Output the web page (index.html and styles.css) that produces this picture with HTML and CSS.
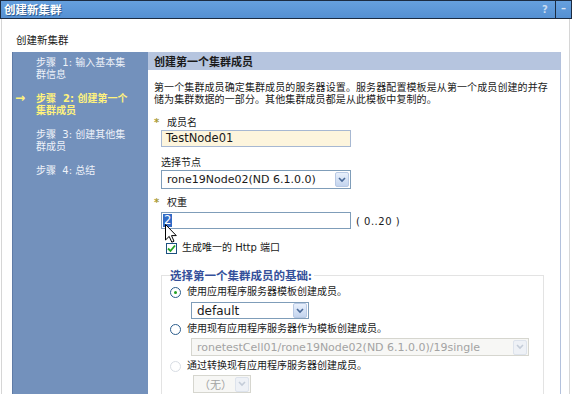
FILE: index.html
```html
<!DOCTYPE html>
<html lang="zh">

<head>
    <meta charset="UTF-8">
    <title>创建新集群</title>
    <link rel="stylesheet" href="styles.css">
</head>

<body>
    <div class="titlebar">
        <span class="title">创建新集群</span>
        <span class="tb-help">?</span>
        <span class="tb-min">–</span>
    </div>

    <div class="frame">
        <div class="subtitle">创建新集群</div>

        <div class="wizard">
            <div class="steps">
                <div class="step">步骤&nbsp; 1: 输入基本集<br>群信息</div>
                <div class="step current"><span class="arrow">→</span>步骤&nbsp; 2: 创建第一个<br>集群成员</div>
                <div class="step">步骤&nbsp; 3: 创建其他集<br>群成员</div>
                <div class="step">步骤&nbsp; 4: 总结</div>
            </div>

            <div class="panel">
                <div class="panel-head">创建第一个集群成员</div>
                <div class="panel-body">
                    <p class="intro">第一个集群成员确定集群成员的服务器设置。服务器配置模板是从第一个成员创建的并存<br>储为集群数据的一部分。其他集群成员都是从此模板中复制的。</p>

                    <div class="label first"><span class="star">*</span>成员名</div>
                    <div class="input name">TestNode01</div>

                    <div class="label node">选择节点</div>
                    <div class="select wide">
                        <span class="select-text">rone19Node02(ND 6.1.0.0)</span>
                        <span class="drop"><svg width="8" height="6" viewBox="0 0 8 6"><path d="M1 1 L4 4 L7 1" fill="none" stroke="#4a6a9a" stroke-width="1.6"/></svg></span>
                    </div>

                    <div class="label weight"><span class="star">*</span>权重</div>
                    <div class="weight-row">
                        <div class="input num"><span class="sel">2</span>
                            <svg class="cursor" width="12" height="19" viewBox="0 0 12 19"><path d="M0.5 0.5 L0.5 16 L4.2 12.4 L6.8 18.2 L9 17.2 L6.5 11.6 L11.3 11.6 Z" fill="#fff" stroke="#000" stroke-width="1"/></svg>
                        </div>
                        <span class="range">( 0..20 )</span>
                    </div>

                    <div class="check-row">
                        <span class="checkbox"><svg width="9" height="9" viewBox="0 0 9 9"><path d="M1 4.5 L3.5 7 L8 1.5" fill="none" stroke="#21a121" stroke-width="1.8"/></svg></span>
                        生成唯一的 Http 端口
                    </div>

                    <fieldset class="basis">
                        <legend>选择第一个集群成员的基础:</legend>

                        <div class="radio-row"><span class="radio on"></span>使用应用程序服务器模板创建成员。</div>
                        <div class="select small">
                            <span class="select-text">default</span>
                            <span class="drop"><svg width="8" height="6" viewBox="0 0 8 6"><path d="M1 1 L4 4 L7 1" fill="none" stroke="#4a6a9a" stroke-width="1.6"/></svg></span>
                        </div>

                        <div class="radio-row"><span class="radio"></span>使用现有应用程序服务器作为模板创建成员。</div>
                        <div class="select long off">
                            <span class="select-text">ronetestCell01/rone19Node02(ND 6.1.0.0)/19single</span>
                            <span class="drop"><svg width="8" height="6" viewBox="0 0 8 6"><path d="M1 1 L4 4 L7 1" fill="none" stroke="#c4ccd8" stroke-width="1.6"/></svg></span>
                        </div>

                        <div class="radio-row"><span class="radio off"></span>通过转换现有应用程序服务器创建成员。</div>
                        <div class="select tiny off">
                            <span class="select-text">（无）</span>
                            <span class="drop"><svg width="8" height="6" viewBox="0 0 8 6"><path d="M1 1 L4 4 L7 1" fill="none" stroke="#c4ccd8" stroke-width="1.6"/></svg></span>
                        </div>
                    </fieldset>
                </div>
            </div>
        </div>
    </div>
</body>

</html>
```

FILE: styles.css
```css
body {
    margin: 0;
    width: 572px;
    height: 394px;
    overflow: hidden;
    background-color: white;
    font-family: 'DejaVu Sans', 'Noto Sans CJK SC', sans-serif;
    font-size: 10px;
    color: #1a1a1a;
}

.titlebar {
    display: flex;
    align-items: center;
    height: 17px;
    border: 1px solid #1c2b40;
    background: linear-gradient(#66a0de, #5590d2);
}

.title {
    flex: 1;
    padding-left: 3px;
    color: white;
    font-weight: bold;
    font-size: 11.5px;
    line-height: 17px;
    font-family: 'Noto Sans CJK SC', sans-serif;
    text-shadow: 1px 1px 0 #2d5a90;
}

.tb-help {
    width: 9px;
    margin-right: 4px;
    color: #c9dbf0;
    font-weight: bold;
    font-size: 10px;
}

.tb-min {
    width: 15px;
    height: 17px;
    line-height: 16px;
    text-align: center;
    border-left: 1px solid #1c2b40;
    color: #d8e4f2;
    font-weight: bold;
}

.frame {
    margin: 0 2px 0 1px;
    padding: 0 8px 0 10px;
    border-left: 1px solid #d6d6d6;
    border-right: 1px solid #d6d6d6;
    height: 375px;
}

.subtitle {
    padding: 14px 0 0 4px;
    height: 19px;
    line-height: 14px;
    font-family: 'Noto Sans CJK SC', sans-serif;
    font-size: 10.5px;
}

.wizard {
    display: flex;
    height: 360px;
}

.steps {
    width: 135px;
    padding-top: 5px;
    background-color: #7391bc;
    border-left: 1px solid #5f7ba6;
}

.step {
    position: relative;
    padding-left: 23px;
    margin-bottom: 12px;
    line-height: 12px;
    color: #eef2f9;
}

.step.current {
    color: #fff27c;
    font-weight: bold;
}

.arrow {
    position: absolute;
    left: 2px;
    top: -1px;
    font-size: 12px;
}

.panel {
    flex: 1;
    border-right: 1px solid #b3c1dc;
}

.panel-head {
    height: 18px;
    line-height: 18px;
    padding-left: 6px;
    background-color: #b6c5df;
    font-weight: bold;
    font-size: 11px;
    font-family: 'Noto Sans CJK SC', sans-serif;
}

.panel-body {
    padding: 12px 6px 0 13px;
}

.intro {
    margin: 0 0 0 -7px;
    line-height: 12px;
    white-space: nowrap;
    letter-spacing: 0.1px;
}

.label {
    line-height: 12px;
    height: 12px;
    margin-left: -7px;
}

.label.first {
    margin-top: 11px;
    margin-bottom: 1px;
}

.label.node {
    margin-top: 10px;
    margin-bottom: 1px;
    margin-left: 0;
}

.label.weight {
    margin-top: 8px;
    margin-bottom: 3px;
}

.star {
    display: inline-block;
    width: 13px;
    color: #a99a34;
    font-weight: bold;
}

.input {
    box-sizing: border-box;
    width: 190px;
    height: 17px;
    line-height: 15px;
    padding-left: 4px;
    font-size: 11.5px;
}

.input.name {
    background-color: #fdf5dd;
    border: 1px solid #a7b8d2;
}

.weight-row {
    display: flex;
    align-items: center;
    gap: 5px;
}

.input.num {
    position: relative;
    background-color: white;
    border: 1px solid #7f9db9;
    padding-left: 1px;
}

.sel {
    display: inline-block;
    background-color: #316ac5;
    color: white;
    line-height: 13px;
    padding: 0 1px;
}

.cursor {
    position: absolute;
    left: 3px;
    top: 11px;
}

.range {
    font-size: 10px;
    letter-spacing: 0.5px;
    padding-top: 2px;
}

.select {
    box-sizing: border-box;
    display: flex;
    align-items: center;
    height: 19px;
    border: 1px solid #7f9db9;
    background-color: white;
    padding: 0 1px 0 5px;
    font-size: 11px;
}

.select-text {
    flex: 1;
    white-space: nowrap;
    overflow: hidden;
}

.drop {
    display: flex;
    align-items: center;
    justify-content: center;
    width: 14px;
    height: 15px;
    box-sizing: border-box;
    border: 1px solid #b8c9e4;
    border-radius: 2px;
    background: linear-gradient(#e8f0fc, #c3d4ee);
}

.select.wide {
    width: 190px;
}

.check-row {
    display: flex;
    align-items: center;
    margin: 13px 0 0 5px;
    line-height: 12px;
}

.checkbox {
    display: flex;
    align-items: center;
    justify-content: center;
    width: 9px;
    height: 9px;
    margin-right: 5px;
    border: 1px solid #1c5180;
    background-color: white;
}

.basis {
    margin: 14px 10px 0 0;
    padding: 0 0 8px 8px;
    border: 1px solid #e3e3e3;
    border-bottom: none;
    min-width: 0;
}

.basis legend {
    padding: 0 2px 0 0;
    color: #35509a;
    font-weight: bold;
    font-size: 11.5px;
    line-height: 14px;
    font-family: 'Noto Sans CJK SC', sans-serif;
}

.radio-row {
    display: flex;
    align-items: center;
    line-height: 12px;
    margin-top: 4px;
}

.radio {
    box-sizing: border-box;
    width: 11px;
    height: 11px;
    margin-right: 6px;
    border: 1px solid #2c5d8c;
    border-radius: 50%;
    background-color: white;
    position: relative;
}

.radio.on::after {
    content: "";
    position: absolute;
    left: 3px;
    top: 3px;
    width: 3px;
    height: 3px;
    border-radius: 50%;
    background-color: #21a121;
}

.radio.off {
    border-color: #d8dde4;
}

.select.small {
    width: 118px;
    height: 17px;
    margin: 4px 0 4px 21px;
    font-size: 12px;
}

.select.long {
    width: 338px;
    height: 18px;
    margin: 3px 0 4px 21px;
}

.select.tiny {
    width: 58px;
    height: 18px;
    margin: 3px 0 0 23px;
}

.select.off {
    background-color: #f7f7f5;
    border-color: #d6d6cf;
    color: #a3a3a3;
}

.select.off .drop {
    background: #eef1f6;
    border-color: #dde3ec;
}
```
